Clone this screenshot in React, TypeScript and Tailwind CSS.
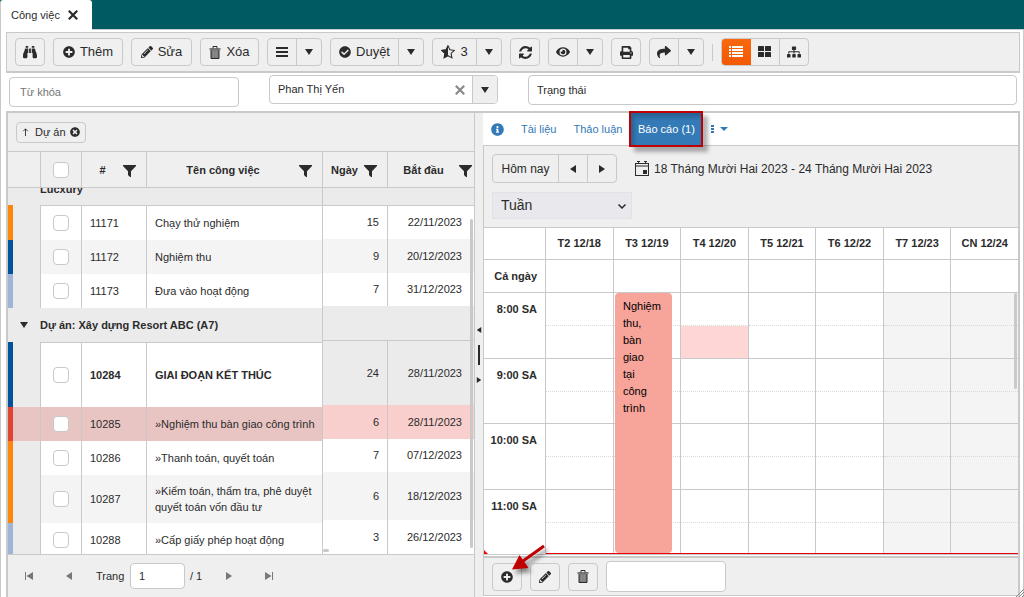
import type { ReactNode } from 'react';
import {
  FaBinoculars,
  FaCheckCircle,
  FaEye,
  FaInfoCircle,
  FaPencilAlt,
  FaPlusCircle,
  FaPrint,
  FaShare,
  FaSitemap,
  FaTimesCircle,
} from 'react-icons/fa';

type Task = {
  id: string;
  name: string;
  days: number;
  start: string;
  mark: string;
  left: string;
  right: string;
  height: string;
  heightRight: string;
  bold?: boolean;
};

const firstTasks: Task[] = [
  { id: '11171', name: 'Chạy thử nghiệm', days: 15, start: '22/11/2023', mark: 'bg-[#ff860d]', left: 'bg-white', right: 'bg-white', height: 'h-[35px]', heightRight: 'h-[34px]' },
  { id: '11172', name: 'Nghiệm thu', days: 9, start: '20/12/2023', mark: 'bg-[#00529b]', left: 'bg-[#f4f4f4]', right: 'bg-[#f4f4f4]', height: 'h-[34px]', heightRight: 'h-[34px]' },
  { id: '11173', name: 'Đưa vào hoạt động', days: 7, start: '31/12/2023', mark: 'bg-[#9db6d5]', left: 'bg-white', right: 'bg-white', height: 'h-[34px]', heightRight: 'h-[33px]' },
];

const secondTasks: Task[] = [
  { id: '10284', name: 'GIAI ĐOẠN KẾT THÚC', days: 24, start: '28/11/2023', mark: 'bg-[#00529b]', left: 'bg-white', right: 'bg-[#ebebeb]', height: 'h-[65px]', heightRight: 'h-[65px]', bold: true },
  { id: '10285', name: '»Nghiệm thu bàn giao công trình', days: 6, start: '28/11/2023', mark: 'bg-[#e04434]', left: 'bg-[#e8c5c3]', right: 'bg-[#f8cfcd]', height: 'h-[34px]', heightRight: 'h-[34px]' },
  { id: '10286', name: '»Thanh toán, quyết toán', days: 7, start: '07/12/2023', mark: 'bg-[#ff860d]', left: 'bg-white', right: 'bg-white', height: 'h-[34px]', heightRight: 'h-[33px]' },
  { id: '10287', name: '»Kiểm toán, thẩm tra, phê duyệt quyết toán vốn đầu tư', days: 6, start: '18/12/2023', mark: 'bg-[#ff860d]', left: 'bg-[#f4f4f4]', right: 'bg-[#f4f4f4]', height: 'h-[48px]', heightRight: 'h-[48px]' },
  { id: '10288', name: '»Cấp giấy phép hoạt động', days: 3, start: '26/12/2023', mark: 'bg-[#9db6d5]', left: 'bg-white', right: 'bg-white', height: 'h-[34px]', heightRight: 'h-[34px]' },
];

const dayNames = ['T2 12/18', 'T3 12/19', 'T4 12/20', 'T5 12/21', 'T6 12/22', 'T7 12/23', 'CN 12/24'];
const hours = ['8:00 SA', '9:00 SA', '10:00 SA', '11:00 SA'];

function Caret({ className = 'h-[6px] w-[8px]' }: { className?: string }) {
  return (
    <svg viewBox="0 0 8 6" preserveAspectRatio="none" className={className} fill="currentColor" aria-hidden="true">
      <path d="M0 0h8L4 6z" />
    </svg>
  );
}

function SideArrow({ flip = false, bar = false, className = 'h-[8px] w-[8px]' }: { flip?: boolean; bar?: boolean; className?: string }) {
  return (
    <svg viewBox="0 0 8 8" className={className} fill="currentColor" aria-hidden="true">
      <g transform={flip ? 'matrix(-1 0 0 1 8 0)' : undefined}>
        <path d={bar ? 'M8 0v8L1.500 4zM0 0h1v8H0z' : 'M7 0v8L1 4z'} />
      </g>
    </svg>
  );
}

function FilterIcon() {
  return (
    <svg viewBox="0 0 13 12" className="h-[12px] w-[13px] shrink-0" fill="currentColor" aria-hidden="true">
      <path d="M0 0h13v1L8 6.200V12H7L5 10V6.200L0 1z" />
    </svg>
  );
}

function MenuIcon() {
  return (
    <svg viewBox="0 0 12 10" className="h-[10px] w-[12px]" fill="currentColor" aria-hidden="true">
      <path d="M0 0h12v2H0zM0 4h12v2H0zM0 8h12v2H0z" />
    </svg>
  );
}

function TrashIcon() {
  return (
    <svg viewBox="0 0 12 13" className="h-[13px] w-[12px]" fill="none" stroke="#2b2b2b" aria-hidden="true">
      <path d="M4 2.500V.500h4v2" />
      <path d="M.500 3h11" strokeWidth="1.200" />
      <path d="M2 4v8.500h8V4" fill="#7c7c7c" />
      <path d="M4.500 5v6M6 5v6M7.500 5v6" stroke="#9a9a9a" strokeWidth=".5" />
    </svg>
  );
}

function HalfStar() {
  return (
    <svg viewBox="0 0 16 16" className="size-[14px]" aria-hidden="true">
      <path d="M8 .8l2.200 4.700 5.100.6-3.800 3.500 1 5.100L8 12.200l-4.500 2.500 1-5.100L.7 6.100l5.100-.6z" fill="none" stroke="#2b2b2b" strokeWidth="1.200" />
      <path d="M8 .2v12.200l-4.800 2.800 1-5.500L0 5.800l5.600-.8z" fill="#2b2b2b" />
    </svg>
  );
}

function RefreshIcon() {
  return (
    <svg viewBox="0 0 1536 1536" className="size-[13px]" fill="currentColor" aria-hidden="true">
      <path d="M1511 928q0 5-1 7-64 268-268 434.500t-478 166.500q-146 0-282.500-55t-243.500-157l-129 129q-19 19-45 19t-45-19-19-45v-448q0-26 19-45t45-19h448q26 0 45 19t19 45-19 45l-137 137q71 66 161 102t187 36q134 0 250-65t186-179q11-17 53-117 8-23 30-23h192q13 0 22.500 9.500t9.500 22.500zm25-800v448q0 26-19 45t-45 19h-448q-26 0-45-19t-19-45 19-45l138-138q-148-137-349-137-134 0-250 65t-186 179q-11 17-53 117-8 23-30 23h-199q-13 0-22.500-9.500t-9.500-22.500v-7q65-268 270-434.500t480-166.500q146 0 284 55.500t245 156.500l130-129q19-19 45-19t45 19 19 45z" />
    </svg>
  );
}

function ListIcon() {
  return (
    <svg viewBox="0 0 14 12" className="h-[12px] w-[14px]" fill="currentColor" aria-hidden="true">
      <path d="M0 0h2v2H0zM3 0h11v2H3zM0 3h2v2H0zM3 3h11v2H3zM0 6h2v2H0zM3 6h11v2H3zM0 9h2v2H0zM3 9h11v2H3z" />
    </svg>
  );
}

function TilesIcon() {
  return (
    <svg viewBox="0 0 14 12" className="h-[12px] w-[14px]" fill="currentColor" aria-hidden="true">
      <rect width="6" height="5" rx=".5" />
      <rect x="7" width="6" height="5" rx=".5" />
      <rect y="6" width="6" height="5" rx=".5" />
      <rect x="7" y="6" width="6" height="5" rx=".5" />
    </svg>
  );
}

function CalendarIcon() {
  return (
    <svg viewBox="0 0 14 15" className="h-[15px] w-[14px]" fill="#2b2b2b" aria-hidden="true">
      <path d="M0 2h14v13H0zM1 5.500V14h12V5.500zM1 3v1.500h12V3z" fillRule="evenodd" />
      <path d="M3 0h1v3H3zM10 0h1v3h-1zM2 0h3v1H2zM9 0h3v1H9zM8 9h4v4H8z" />
    </svg>
  );
}

function Cross({ className }: { className: string }) {
  return (
    <svg viewBox="0 0 10 10" className={className} fill="none" stroke="currentColor" strokeWidth="2.200" aria-hidden="true">
      <path d="M.8.8l8.400 8.400M9.200.8L.8 9.200" />
    </svg>
  );
}

function ToolButton({ label, width, children }: { label: string; width: string; children: ReactNode }) {
  return (
    <button
      type="button"
      aria-label={label}
      className={`flex h-[28px] shrink-0 items-center justify-center gap-[5px] rounded-[4px] border border-[#c9c9c9] bg-[#f0f0f0] text-[13px] ${width}`}
    >
      {children}
    </button>
  );
}

function SplitButton({ label, width, children }: { label: string; width: string; children: ReactNode }) {
  return (
    <div className="flex h-[28px] shrink-0 rounded-[4px] border border-[#c9c9c9] text-[13px]">
      <button type="button" aria-label={label} className={`flex items-center justify-center gap-[5px] ${width}`}>
        {children}
      </button>
      <button type="button" aria-label={`${label}: thêm lựa chọn`} className="flex w-[25px] items-center justify-center border-l border-[#c9c9c9]">
        <Caret />
      </button>
    </div>
  );
}

function Check({ label }: { label: string }) {
  return (
    <input
      type="checkbox"
      aria-label={label}
      className="mx-auto block size-[16px] appearance-none rounded-[4px] border border-[#c9c9c9] bg-white checked:bg-[#ff860d]"
    />
  );
}

function LockedCols() {
  return (
    <colgroup>
      <col className="w-[32px]" />
      <col className="w-[41px]" />
      <col className="w-[65px]" />
      <col />
    </colgroup>
  );
}

function LockedRow({ task, top }: { task: Task; top: boolean }) {
  const line = `border-l border-[#c9c9c9] ${top ? 'border-t' : ''} ${task.left}`;
  const weight = task.bold ? 'font-bold' : '';
  const selected = task.id === '10285';
  return (
    <tr className={task.height}>
      <td className={`p-0 ${selected ? 'bg-[#e8c5c3]' : ''}`}>
        <div className={`w-[5px] ${task.height} ${task.mark}`} />
      </td>
      <td className={`p-0 ${line}`}>
        <Check label={`Chọn ${task.id}`} />
      </td>
      <td className={`px-2 py-0 ${line} ${weight}`}>{task.id}</td>
      <td className={`py-0 pl-2 pr-[2px] leading-[16px] ${line} ${weight}`}>{task.name}</td>
    </tr>
  );
}

function ScrollRow({ task, top }: { task: Task; top: boolean }) {
  const line = `${top ? 'border-t' : ''} border-[#c9c9c9] ${task.right}`;
  return (
    <tr className={task.heightRight}>
      <td className={`py-0 pr-2 text-right ${line}`}>{task.days}</td>
      <td className={`border-l py-0 pr-3 text-right ${line}`}>{task.start}</td>
    </tr>
  );
}

function TaskGrid() {
  return (
    <section className="flex w-[467px] shrink-0 flex-col border-r border-[#c9c9c9] bg-[#efefef]">
      <div className="flex h-[38px] shrink-0 items-center pl-2">
        <button type="button" className="flex h-[21px] items-center rounded-[4px] border border-[#c9c9c9] px-[5px]">
          <svg viewBox="0 0 7 9" className="mr-[6px] h-[8px] w-[7px]" fill="none" stroke="#2b2b2b" aria-hidden="true">
            <path d="M3.500 9V1M1 3.500L3.500 1 6 3.500" />
          </svg>
          Dự án
          <FaTimesCircle className="ml-[4px] size-[10px]" />
        </button>
      </div>

      <div className="flex h-[37px] shrink-0 border-y border-[#c9c9c9]">
        <table className="h-full w-[314px] table-fixed border-separate border-spacing-0">
          <LockedCols />
          <thead>
            <tr>
              <th className="p-0" aria-label="Trạng thái" />
              <th className="border-l border-[#c9c9c9] p-0">
                <Check label="Chọn tất cả" />
              </th>
              <th className="border-l border-[#c9c9c9] p-0">
                <div className="flex items-center pr-[10px] pt-[2px]">
                  <span className="flex-1 text-center">#</span>
                  <FilterIcon />
                </div>
              </th>
              <th className="border-l border-[#c9c9c9] p-0">
                <div className="flex items-center pr-[10px] pt-[2px]">
                  <span className="flex-1 text-center">Tên công việc</span>
                  <FilterIcon />
                </div>
              </th>
            </tr>
          </thead>
        </table>
        <table className="h-full min-w-0 flex-1 table-fixed border-separate border-spacing-0 border-l border-[#c9c9c9]">
          <colgroup>
            <col className="w-[64px]" />
            <col />
          </colgroup>
          <thead>
            <tr>
              <th className="p-0">
                <div className="flex items-center justify-between pl-2 pr-[10px] pt-[2px]">
                  Ngày
                  <FilterIcon />
                </div>
              </th>
              <th className="border-l border-[#c9c9c9] p-0">
                <div className="flex items-center pr-[2px] pt-[2px]">
                  <span className="flex-1 text-center">Bắt đầu</span>
                  <FilterIcon />
                </div>
              </th>
            </tr>
          </thead>
        </table>
      </div>

      <div className="relative flex min-h-0 flex-1 items-start overflow-hidden border-b border-[#c9c9c9] bg-[#ebebeb]">
        <table className="-mt-[16px] w-[314px] shrink-0 table-fixed border-separate border-spacing-0">
          <LockedCols />
          <tbody>
            <tr className="h-[33px]">
              <td />
              <td colSpan={3} className="p-0 pt-[2px] font-bold">Lucxury</td>
            </tr>
            {firstTasks.map((task, i) => (
              <LockedRow key={task.id} task={task} top={i === 0} />
            ))}
            <tr className="h-[34px]">
              <td className="py-0 pl-[12px]">
                <button type="button" aria-label="Thu gọn" className="block">
                  <Caret />
                </button>
              </td>
              <td colSpan={3} className="p-0 font-bold">Dự án: Xây dựng Resort ABC (A7)</td>
            </tr>
            {secondTasks.map((task, i) => (
              <LockedRow key={task.id} task={task} top={i === 0} />
            ))}
          </tbody>
        </table>
        <div className="min-w-0 flex-1 self-stretch border-l border-[#c9c9c9]">
          <table className="w-full table-fixed border-separate border-spacing-0">
            <colgroup>
              <col className="w-[64px]" />
              <col />
            </colgroup>
            <tbody>
              <tr className="h-[17px]">
                <td colSpan={2} />
              </tr>
              {firstTasks.map((task, i) => (
                <ScrollRow key={task.id} task={task} top={i === 0} />
              ))}
              <tr className="h-[34px]">
                <td colSpan={2} />
              </tr>
              {secondTasks.map((task, i) => (
                <ScrollRow key={task.id} task={task} top={i === 0} />
              ))}
            </tbody>
          </table>
        </div>
        <div className="absolute bottom-[6px] right-[1px] top-[31px] w-[3px] rounded-full bg-[#c9c9c9]" />
        <div className="absolute bottom-[2px] left-[315px] h-[3px] w-[6px] rounded-full bg-[#c9c9c9]" />
      </div>

      <nav className="flex h-[42px] shrink-0 items-center pl-[17px] text-[#2b2b2b]" aria-label="Phân trang">
        <button type="button" aria-label="Trang đầu" className="text-[#777]">
          <SideArrow bar />
        </button>
        <button type="button" aria-label="Trang trước" className="ml-[32px] mr-[23px] text-[#777]">
          <SideArrow />
        </button>
        <label htmlFor="page" className="w-[28px]">Trang</label>
        <input id="page" defaultValue="1" className="ml-[6px] mr-[5px] h-[26px] w-[55px] rounded-[4px] border border-[#c9c9c9] bg-white px-2" />
        <span>/ 1</span>
        <button type="button" aria-label="Trang sau" className="ml-[23px] mr-[32px] text-[#777]">
          <SideArrow flip />
        </button>
        <button type="button" aria-label="Trang cuối" className="text-[#777]">
          <SideArrow flip bar />
        </button>
      </nav>
    </section>
  );
}

function Scheduler() {
  return (
    <div className="relative min-h-0 flex-1 overflow-hidden border-b border-[#c9c9c9] bg-white">
      <table className="w-full table-fixed border-separate border-spacing-0">
        <colgroup>
          <col className="w-[61px]" />
          {dayNames.map((day) => (
            <col key={day} />
          ))}
        </colgroup>
        <thead>
          <tr className="h-[32px]">
            <td className="border-b border-[#c9c9c9]" />
            {dayNames.map((day) => (
              <th key={day} className="border-b border-l border-[#c9c9c9] p-0 text-center">{day}</th>
            ))}
          </tr>
          <tr className="h-[33px]">
            <th className="border-b border-[#c9c9c9] py-0 pr-2 text-right">Cả ngày</th>
            {dayNames.map((day) => (
              <td key={day} className="border-b border-l border-[#c9c9c9]" />
            ))}
          </tr>
        </thead>
        {hours.map((hour, row) => (
          <tbody key={hour}>
            <tr className="h-[33px]">
              <th rowSpan={2} className="border-b border-[#c9c9c9] py-0 pr-2 pt-[8px] text-right align-top">{hour}</th>
              {dayNames.map((day, i) => (
                <td
                  key={day}
                  className={`border-l border-[#c9c9c9] p-0 align-bottom ${i > 4 ? 'bg-[#f4f4f4]' : ''}`}
                >
                  <div className="border-b border-dotted border-[#d9d9d9]" />
                </td>
              ))}
            </tr>
            <tr className={row % 2 === 0 ? 'h-[33px]' : 'h-[32px]'}>
              {dayNames.map((day, i) => (
                <td
                  key={day}
                  className={`border-b border-l border-[#c9c9c9] p-0 ${i > 4 ? 'bg-[#f4f4f4]' : ''} ${row === 0 && i === 2 ? 'bg-[#fed6d5]' : ''}`}
                />
              ))}
            </tr>
          </tbody>
        ))}
      </table>
      <div className="absolute bottom-[1px] left-[131px] top-[65px] w-[57px] rounded-[4px] bg-[#f7a49a] px-2 pt-[5px] leading-[17px] text-black">
        {['Nghiệm', 'thu,', 'bàn', 'giao', 'tại', 'công', 'trình'].map((word) => (
          <span key={word} className="block">{word}</span>
        ))}
      </div>
      <div className="absolute bottom-0 left-[62px] right-0 h-px bg-[#e8000d]" />
      <svg viewBox="0 0 4 4" className="absolute bottom-0 left-0 size-[4px]" fill="#f00" aria-hidden="true">
        <path d="M0 0l4 4H0z" />
      </svg>
      <div className="absolute right-[1px] top-[65px] h-[96px] w-[3px] rounded-full bg-[#c9c9c9]" />
    </div>
  );
}

function ReportPanel() {
  return (
    <section className="flex min-w-0 flex-1 flex-col pb-px">
      <nav className="flex h-[33px] shrink-0 items-center border-b border-[#c9c9c9] bg-white pl-2 text-[#337ab7]" aria-label="Chi tiết">
        <a href="#info" aria-label="Thông tin">
          <FaInfoCircle className="size-[13px]" />
        </a>
        <a href="#documents" className="ml-[17px]">Tài liệu</a>
        <a href="#discussion" className="ml-[17px]">Thảo luận</a>
        <a
          href="#report"
          className="relative z-10 ml-[7px] flex h-[36px] w-[74px] items-center justify-center border-2 border-[#c00000] bg-[#337ab7] text-white shadow-[5px_5px_4px_rgba(0,0,0,0.3),inset_3px_4px_4px_rgba(0,0,0,0.2)]"
        >
          Báo cáo (1)
        </a>
        <button type="button" aria-label="Thêm mục" className="ml-[8px] flex items-center gap-[6px]">
          <svg viewBox="0 0 3 9" className="h-[9px] w-[3px]" fill="currentColor" aria-hidden="true">
            <path d="M0 0h3v2H0zM0 3h3v2H0zM0 6h3v2H0z" />
          </svg>
          <Caret className="h-[4px] w-[8px]" />
        </button>
      </nav>

      <div className="flex min-h-0 flex-1 flex-col border-l border-[#c9c9c9]">
        <div className="flex h-[82px] shrink-0 flex-col items-start gap-[9px] border-b border-[#c9c9c9] bg-[#efefef] px-2 pt-2">
          <div className="flex items-center">
            <div className="flex h-[29px] rounded-[4px] border border-[#c9c9c9]">
              <button type="button" className="w-[65px] text-[12px]">Hôm nay</button>
              <button type="button" aria-label="Tuần trước" className="flex w-[29px] items-center justify-center border-l border-[#c9c9c9]">
                <SideArrow />
              </button>
              <button type="button" aria-label="Tuần sau" className="flex w-[29px] items-center justify-center border-l border-[#c9c9c9]">
                <SideArrow flip />
              </button>
            </div>
            <button type="button" className="ml-[18px] flex items-center gap-[5px] text-[12px]">
              <CalendarIcon />
              18 Tháng Mười Hai 2023 - 24 Tháng Mười Hai 2023
            </button>
          </div>
          <div className="relative">
            <select aria-label="Chế độ xem" className="h-[27px] w-[140px] appearance-none border border-[#e2e2e6] bg-[#e9e9ed] px-2 text-[14px]">
              <option>Tuần</option>
            </select>
            <svg viewBox="0 0 8 5" className="pointer-events-none absolute right-[6px] top-[12px] h-[5px] w-[8px]" fill="none" stroke="#2b2b2b" strokeWidth="1.500" aria-hidden="true">
              <path d="M.500.500L4 4 7.500.500" />
            </svg>
          </div>
        </div>
        <Scheduler />
        <div className="relative mt-[1px] flex h-[40px] shrink-0 items-center gap-2 border-b border-t-2 border-[#c9c9c9] bg-[#efefef] px-2">
          <ToolButton label="Thêm báo cáo" width="w-[30px]">
            <FaPlusCircle className="size-[12px]" />
          </ToolButton>
          <ToolButton label="Sửa báo cáo" width="w-[30px]">
            <FaPencilAlt className="size-[12px]" />
          </ToolButton>
          <ToolButton label="Xóa báo cáo" width="w-[30px]">
            <TrashIcon />
          </ToolButton>
          <input aria-label="Nội dung" className="h-[31px] w-[120px] rounded-[4px] border border-[#c9c9c9] bg-white px-2" />
          <svg viewBox="0 0 44 36" className="pointer-events-none absolute -top-[14px] left-[26px] h-[36px] w-[44px] drop-shadow-[3px_4px_2px_rgba(0,0,0,0.45)]" aria-hidden="true">
            <path d="M34 2L13 17" stroke="#c00000" strokeWidth="3" />
            <path d="M2 25.500L9.500 11l3.200 4.600L18.500 24z" fill="#c00000" />
          </svg>
        </div>
      </div>
    </section>
  );
}

export default function App() {
  return (
    <div className="flex h-screen flex-col overflow-hidden bg-white font-['Liberation_Sans',sans-serif] text-[11px] text-[#2b2b2b]">
      <header className="flex h-[30px] shrink-0 items-end border-b border-[#c9c9c9] bg-[#005a61]">
        <div className="-mb-px flex h-[30px] w-[92px] items-center rounded-t-[3px] border-l border-[#c9c9c9] bg-white pl-[10px]">
          <a href="#tasks">Công việc</a>
          <button type="button" aria-label="Đóng" className="ml-[8px]">
            <Cross className="size-[10px]" />
          </button>
        </div>
      </header>

      <main className="flex min-h-0 flex-1 flex-col border-x border-[#c9c9c9] pl-[5px] pr-[3px] pt-[2px]">
        <div className="flex h-[41px] shrink-0 items-center gap-2 border border-b-2 border-[#c9c9c9] bg-[#efefef] px-2">
          <ToolButton label="Tìm kiếm" width="w-[30px]">
            <FaBinoculars className="size-[14px]" />
          </ToolButton>
          <ToolButton label="Thêm" width="w-[70px]">
            <FaPlusCircle className="size-[12px]" />
            Thêm
          </ToolButton>
          <ToolButton label="Sửa" width="w-[61px]">
            <FaPencilAlt className="size-[12px]" />
            Sửa
          </ToolButton>
          <ToolButton label="Xóa" width="w-[59px]">
            <TrashIcon />
            Xóa
          </ToolButton>
          <SplitButton label="Danh sách" width="w-[28px]">
            <MenuIcon />
          </SplitButton>
          <SplitButton label="Duyệt" width="w-[67px]">
            <FaCheckCircle className="size-[12px]" />
            Duyệt
          </SplitButton>
          <SplitButton label="Đánh giá 3" width="w-[43px]">
            <HalfStar />
            3
          </SplitButton>
          <ToolButton label="Làm mới" width="w-[30px]">
            <RefreshIcon />
          </ToolButton>
          <SplitButton label="Xem" width="w-[28px]">
            <FaEye className="size-[14px]" />
          </SplitButton>
          <ToolButton label="In" width="w-[30px]">
            <FaPrint className="size-[13px]" />
          </ToolButton>
          <SplitButton label="Chia sẻ" width="w-[28px]">
            <FaShare className="size-[14px]" />
          </SplitButton>
          <div className="h-[17px] w-px bg-[#c9c9c9]" />
          <div className="flex h-[28px] shrink-0 overflow-hidden rounded-[4px] border border-[#c9c9c9]">
            <button type="button" aria-label="Dạng danh sách" className="-m-px flex w-[30px] items-center justify-center bg-linear-to-b from-[#f9690f] to-[#f35800] text-white">
              <ListIcon />
            </button>
            <button type="button" aria-label="Dạng lưới" className="flex w-[29px] items-center justify-center">
              <TilesIcon />
            </button>
            <button type="button" aria-label="Dạng cây" className="flex w-[29px] items-center justify-center border-l border-[#c9c9c9]">
              <FaSitemap className="size-[14px]" />
            </button>
          </div>
        </div>

        <div className="flex h-[40px] shrink-0 items-start gap-[30px] border-b-2 border-[#c9c9c9] px-[3px] pt-[2px]">
          <input
            aria-label="Từ khóa"
            placeholder="Từ khóa"
            className="mt-[2px] h-[30px] w-[230px] shrink-0 rounded-[4px] border border-[#c9c9c9] px-[10px] placeholder:text-[#757575]"
          />
          <div className="flex h-[29px] w-[229px] shrink-0 items-stretch overflow-hidden rounded-[4px] border border-[#c9c9c9]">
            <input aria-label="Người thực hiện" defaultValue="Phan Thị Yến" className="min-w-0 flex-1 px-2" />
            <button type="button" aria-label="Xóa lựa chọn" className="px-[7px] text-[#8a8a8a]">
              <Cross className="size-[10px]" />
            </button>
            <button type="button" aria-label="Mở danh sách" className="flex w-[25px] items-center justify-center border-l border-[#c9c9c9] bg-[#efefef]">
              <Caret />
            </button>
          </div>
          <input aria-label="Trạng thái" defaultValue="Trạng thái" className="h-[30px] min-w-0 flex-1 rounded-[4px] border border-[#c9c9c9] px-2" />
        </div>

        <div className="flex min-h-0 flex-1 border-x-2 border-[#c9c9c9]">
          <TaskGrid />
          <div className="flex w-[8px] shrink-0 flex-col items-center justify-center gap-[12px] bg-[#efefef]">
            <SideArrow className="size-[6px]" />
            <div className="h-[20px] w-[2px] bg-[#2b2b2b]" />
            <SideArrow flip className="size-[6px]" />
          </div>
          <ReportPanel />
        </div>
      </main>
      <svg viewBox="0 0 8 8" className="pointer-events-none absolute bottom-0 right-0 size-[8px]" stroke="#8a8a8a" aria-hidden="true">
        <path d="M0 8l8-8M3 8l5-5M6 8l2-2" />
      </svg>
    </div>
  );
}
